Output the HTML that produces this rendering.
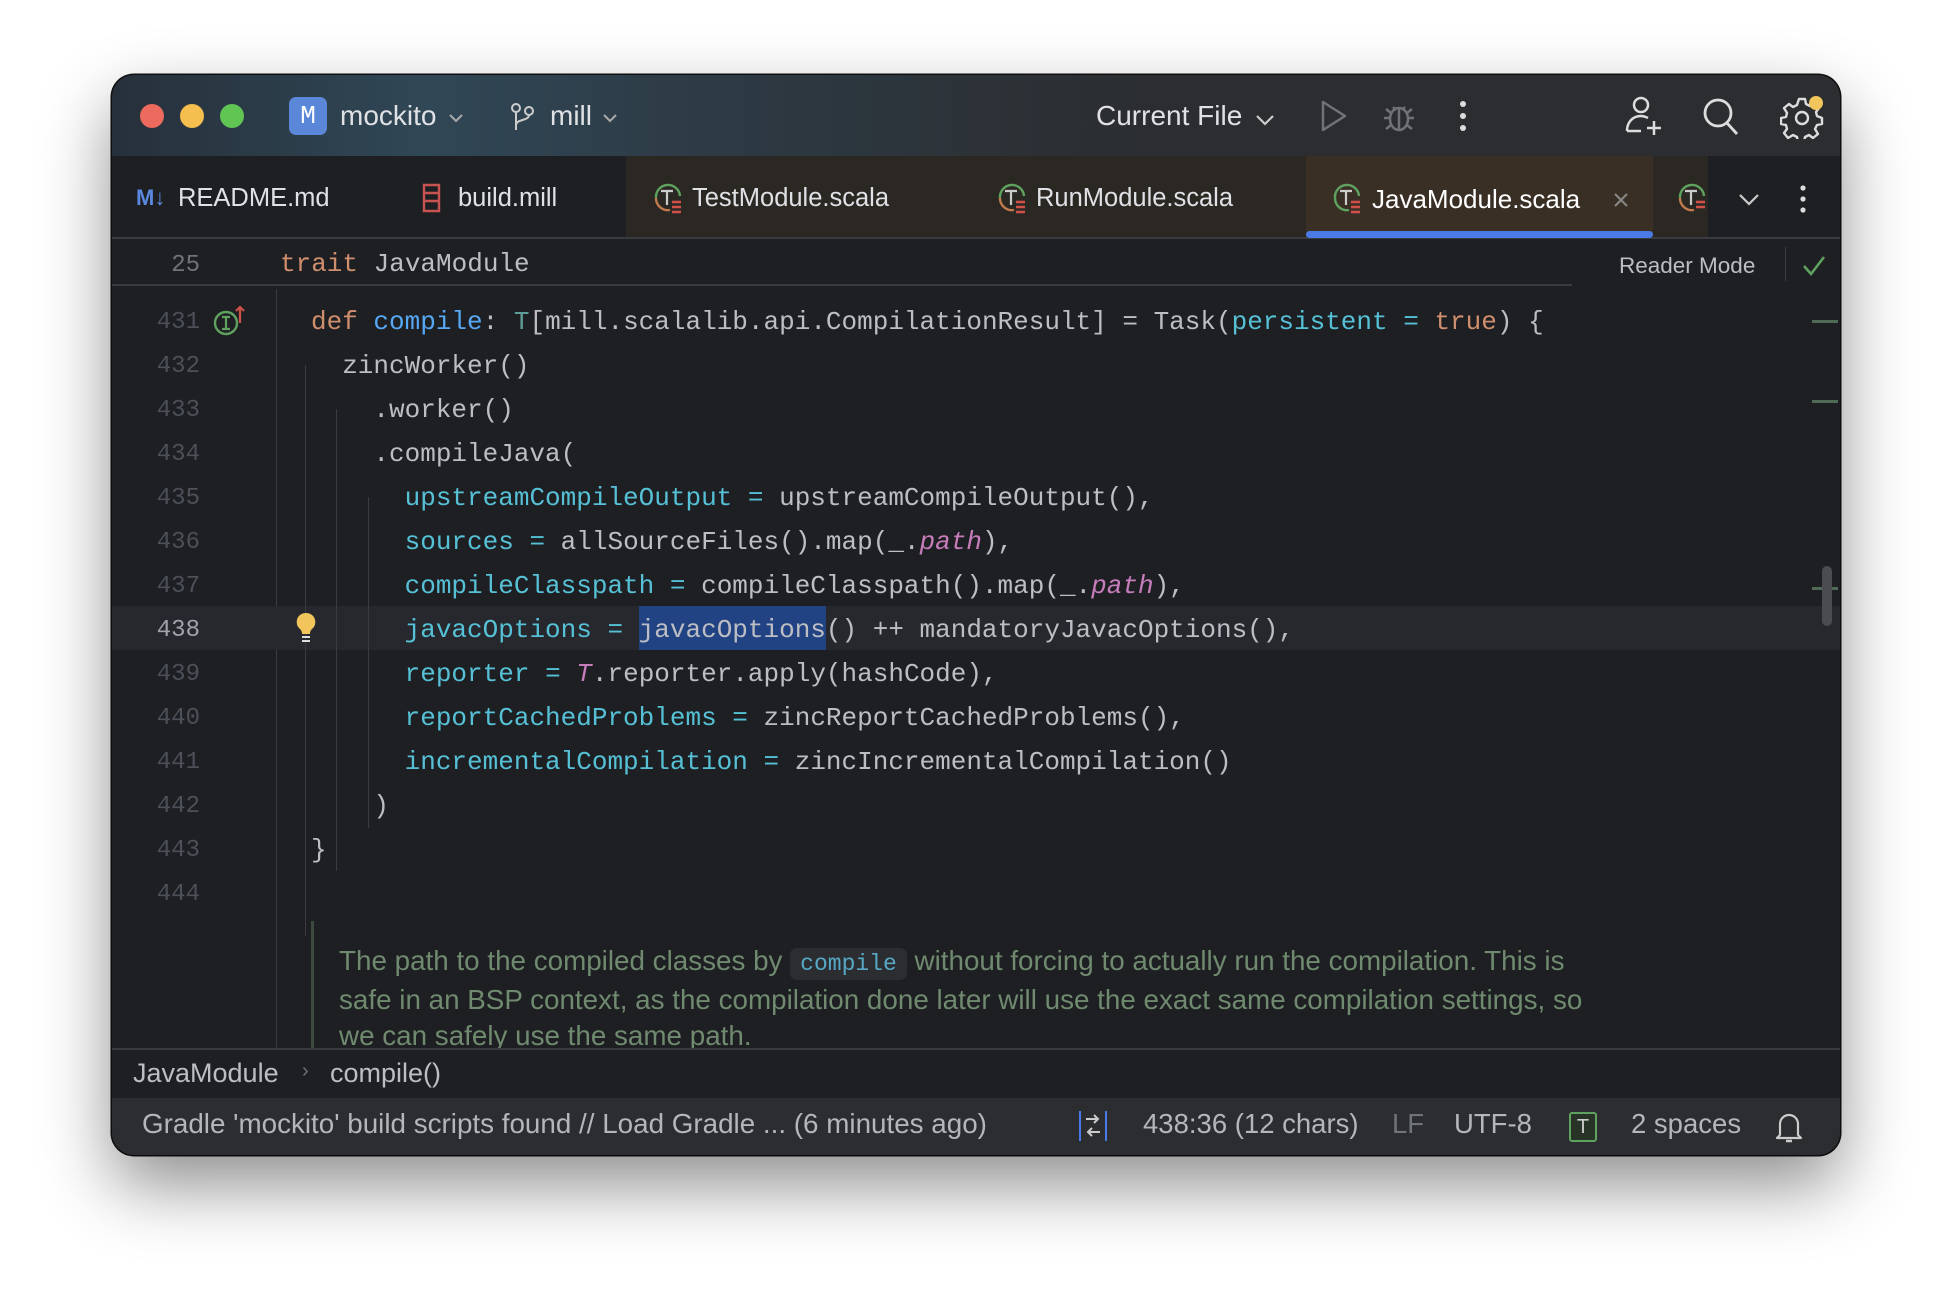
<!DOCTYPE html>
<html><head><meta charset="utf-8"><style>
*{margin:0;padding:0;box-sizing:border-box}
body{width:1952px;height:1304px;background:#fff;position:relative;overflow:hidden;font-family:"Liberation Sans",sans-serif}
.win{position:absolute;left:112px;top:75px;width:1728px;height:1080px;border-radius:22px;background:#1e1f22;overflow:hidden;box-shadow:0 30px 70px rgba(0,0,0,.45),0 0 0 1.5px #111;}
.abs{position:absolute}
.title{left:0;top:0;width:1728px;height:81px;background:linear-gradient(90deg,#26303a 0%,#304756 18%,#2d3a44 35%,#2b2d30 60%,#2b2d30 100%)}
.ui{color:#dfe1e5;font-size:27px;white-space:nowrap}
.tabs{left:0;top:81px;width:1728px;height:83px;background:#1e1f22;border-bottom:2px solid #393b40}
.tab{position:absolute;top:0;height:81px}
.code{font-family:"Liberation Mono",monospace;font-size:26px;color:#bcbec4;white-space:pre}
.ln{position:absolute;width:88px;text-align:right;left:0;font-family:"Liberation Mono",monospace;font-size:24px;color:#4b5059}
.k{color:#cf8e6d}.f{color:#56a8f5}.n{color:#56c1d6}.p{color:#c77dbb;font-style:italic}.t{color:#5f9e98}
.guide{position:absolute;width:1px;background:#393b40}
</style></head><body>
<div class="win">
 <div class="abs title"></div>
 <div class="abs" style="left:28px;top:29px;width:24px;height:24px;border-radius:50%;background:#ed6a5e"></div>
 <div class="abs" style="left:68px;top:29px;width:24px;height:24px;border-radius:50%;background:#f5bf4f"></div>
 <div class="abs" style="left:108px;top:29px;width:24px;height:24px;border-radius:50%;background:#61c554"></div>
 <div class="abs" style="left:177px;top:22px;width:38px;height:38px;border-radius:7px;background:#5a87d8;color:#fff;font-family:'Liberation Mono',monospace;font-size:26px;text-align:center;line-height:38px">M</div>
 <div class="abs ui" style="left:228px;top:25px;font-size:28px">mockito</div>
 <svg class="abs" style="left:336px;top:37px" width="16" height="12" viewBox="0 0 16 12"><path d="M2 3l6 6 6-6" stroke="#aaa" stroke-width="2" fill="none"/></svg>
 <svg class="abs" style="left:398px;top:27px" width="26" height="30" viewBox="0 0 26 30"><circle cx="6" cy="6" r="4" stroke="#ccc" stroke-width="2" fill="none"/><circle cx="19" cy="9" r="4" stroke="#ccc" stroke-width="2" fill="none"/><path d="M6 10v18M19 13c0 6-13 4-13 10" stroke="#ccc" stroke-width="2" fill="none"/></svg>
 <div class="abs ui" style="left:438px;top:25px;font-size:28px">mill</div>
 <svg class="abs" style="left:490px;top:37px" width="16" height="12" viewBox="0 0 16 12"><path d="M2 3l6 6 6-6" stroke="#aaa" stroke-width="2" fill="none"/></svg>
 <div class="abs ui" style="left:984px;top:25px;font-size:28px">Current File</div>
 <svg class="abs" style="left:1143px;top:38px" width="20" height="14" viewBox="0 0 20 14"><path d="M2 3l8 8 8-8" stroke="#ccc" stroke-width="2.2" fill="none"/></svg>
 <svg class="abs" style="left:1206px;top:24px" width="30" height="34" viewBox="0 0 30 34"><path d="M5 3v28l22-14z" stroke="#6f7277" stroke-width="2.5" fill="none" stroke-linejoin="round"/></svg>
 <svg class="abs" style="left:1270px;top:24px" width="34" height="34" viewBox="0 0 34 34"><ellipse cx="17" cy="20" rx="9" ry="11" stroke="#6f7277" stroke-width="2.5" fill="none"/><path d="M11 8l3 3M23 8l-3 3M2 19h6M26 19h6M4 10l5 4M30 10l-5 4M4 30l5-4M30 30l-5-4M17 10v21" stroke="#6f7277" stroke-width="2.5" fill="none"/></svg>
 <svg class="abs" style="left:1347px;top:24px" width="8" height="34" viewBox="0 0 8 34"><circle cx="4" cy="5" r="3" fill="#ddd"/><circle cx="4" cy="17" r="3" fill="#ddd"/><circle cx="4" cy="29" r="3" fill="#ddd"/></svg>
 <svg class="abs" style="left:1512px;top:20px" width="40" height="42" viewBox="0 0 40 42"><circle cx="17" cy="10" r="7" stroke="#ddd" stroke-width="2.5" fill="none"/><path d="M3 36c0-9 6-15 14-15 3 0 5 1 7 2" stroke="#ddd" stroke-width="2.5" fill="none"/><path d="M3 36h14M30 26v14M23 33h14" stroke="#ddd" stroke-width="2.5" fill="none"/></svg>
 <svg class="abs" style="left:1590px;top:22px" width="38" height="40" viewBox="0 0 38 40"><circle cx="16" cy="16" r="13" stroke="#ddd" stroke-width="2.8" fill="none"/><path d="M25 26l10 11" stroke="#ddd" stroke-width="2.8"/></svg>
 <svg class="abs" style="left:1668px;top:20px" width="44" height="44" viewBox="0 0 44 44"><path d="M19 4h6l1 5 4 2 5-3 4 5-3 4 1 4 5 2v6l-5 1-2 4 3 5-5 4-4-3-4 2-1 5h-6l-1-5-4-2-5 3-4-5 3-4-1-4-5-1v-6l5-1 1-4-3-5 5-4 4 3 4-2z" stroke="#ddd" stroke-width="2.4" fill="none" stroke-linejoin="round"/><circle cx="22" cy="23" r="6" stroke="#ddd" stroke-width="2.4" fill="none"/><circle cx="36" cy="8" r="7" fill="#f2c55c"/></svg>

 <div class="abs tabs">
  <div class="tab" style="left:514px;width:680px;background:#2b2824"></div>
  <div class="tab" style="left:1194px;width:347px;background:#3a2f25"></div>
  <div class="tab" style="left:1541px;width:55px;background:#2b2824"></div>
  <div class="abs" style="left:1194px;top:75px;width:347px;height:7px;border-radius:4px;background:#4a7ae6"></div>
  <div class="abs" style="left:24px;top:29px;font-size:22px;font-weight:bold;color:#5b88e0">M↓</div>
  <div class="abs ui" style="left:66px;top:28px;font-size:25.5px">README.md</div>
  <svg class="abs" style="left:309px;top:26px" width="22" height="32" viewBox="0 0 22 32"><path d="M3 3h15v26H3z M3 11h15M3 19h15" stroke="#c75450" stroke-width="2.4" fill="none"/></svg>
  <div class="abs ui" style="left:346px;top:28px;font-size:25.5px">build.mill</div>
  <svg class="abs" style="left:540px;top:26px" width="34" height="34" viewBox="0 0 34 34"><path d="M4 16a12 12 0 0 1 24-2" stroke="#5fa15f" stroke-width="2.4" fill="none"/><path d="M4 16a12 12 0 0 0 14 12" stroke="#c17a4e" stroke-width="2.4" fill="none"/><path d="M9 9h12M15 9v14" stroke="#ccc" stroke-width="2.2"/><path d="M20 20h9M20 25h9M20 30h9" stroke="#d0504a" stroke-width="2.4"/></svg>
  <div class="abs ui" style="left:580px;top:28px;font-size:25.5px">TestModule.scala</div>
  <svg class="abs" style="left:884px;top:26px" width="34" height="34" viewBox="0 0 34 34"><path d="M4 16a12 12 0 0 1 24-2" stroke="#5fa15f" stroke-width="2.4" fill="none"/><path d="M4 16a12 12 0 0 0 14 12" stroke="#c17a4e" stroke-width="2.4" fill="none"/><path d="M9 9h12M15 9v14" stroke="#ccc" stroke-width="2.2"/><path d="M20 20h9M20 25h9M20 30h9" stroke="#d0504a" stroke-width="2.4"/></svg>
  <div class="abs ui" style="left:924px;top:28px;font-size:25.5px">RunModule.scala</div>
  <svg class="abs" style="left:1219px;top:26px" width="34" height="34" viewBox="0 0 34 34"><path d="M4 16a12 12 0 0 1 24-2" stroke="#5fa15f" stroke-width="2.4" fill="none"/><path d="M4 16a12 12 0 0 0 14 12" stroke="#5fa15f" stroke-width="2.4" fill="none"/><path d="M9 9h12M15 9v14" stroke="#ccc" stroke-width="2.2"/><path d="M20 20h9M20 25h9M20 30h9" stroke="#d0504a" stroke-width="2.4"/></svg>
  <div class="abs ui" style="left:1260px;top:28px;font-size:26px;color:#fff">JavaModule.scala</div>
  <svg class="abs" style="left:1500px;top:35px" width="18" height="18" viewBox="0 0 18 18"><path d="M3 3l12 12M15 3L3 15" stroke="#888" stroke-width="2"/></svg>
  <svg class="abs" style="left:1564px;top:26px" width="32" height="34" viewBox="0 0 32 34"><path d="M4 16a12 12 0 0 1 24-2" stroke="#5fa15f" stroke-width="2.4" fill="none"/><path d="M4 16a12 12 0 0 0 14 12" stroke="#c17a4e" stroke-width="2.4" fill="none"/><path d="M9 9h12M15 9v14" stroke="#ccc" stroke-width="2.2"/><path d="M20 20h9M20 25h9" stroke="#d0504a" stroke-width="2.4"/></svg>
  <svg class="abs" style="left:1626px;top:36px" width="22" height="14" viewBox="0 0 22 14"><path d="M2 3l9 9 9-9" stroke="#ccc" stroke-width="2.2" fill="none"/></svg>
  <svg class="abs" style="left:1687px;top:28px" width="8" height="30" viewBox="0 0 8 30"><circle cx="4" cy="4" r="2.6" fill="#ddd"/><circle cx="4" cy="15" r="2.6" fill="#ddd"/><circle cx="4" cy="26" r="2.6" fill="#ddd"/></svg>
 </div>

 <!-- sticky header -->
 <div class="abs" style="left:0;top:164px;width:1460px;height:47px;border-bottom:2px solid #393b40"></div>
 <div class="ln" style="top:177px;color:#6f737a">25</div>
 <div class="abs code" style="left:168px;top:174px"><span class="k">trait</span> JavaModule</div>
 <div class="abs" style="left:1460px;top:164px;width:268px;height:50px;background:#1e1f22"></div>
 <div class="abs ui" style="left:1507px;top:178px;font-size:22.5px;color:#bcbec4">Reader Mode</div>
 <div class="abs" style="left:1673px;top:172px;width:1px;height:34px;background:#393b40"></div>
 <svg class="abs" style="left:1690px;top:180px" width="24" height="22" viewBox="0 0 24 22"><path d="M2 11l7 8L22 2" stroke="#5fa15f" stroke-width="2.6" fill="none"/></svg>

 <!-- gutter -->
 <div class="abs" style="left:164px;top:214px;width:1px;height:760px;background:#393b40"></div>
 <div class="abs" style="left:0;top:531px;width:1728px;height:44px;background:#26282e"></div>
 <div class="guide" style="left:193px;top:290px;height:571px"></div>
 <div class="guide" style="left:224px;top:334px;height:462px"></div>
 <div class="guide" style="left:256px;top:422px;height:331px"></div>
 <div class="abs" style="left:527px;top:531px;width:187px;height:44px;background:#214283"></div>

 <div class="ln" style="top:234px">431</div>
 <div class="ln" style="top:278px">432</div>
 <div class="ln" style="top:322px">433</div>
 <div class="ln" style="top:366px">434</div>
 <div class="ln" style="top:410px">435</div>
 <div class="ln" style="top:454px">436</div>
 <div class="ln" style="top:498px">437</div>
 <div class="ln" style="top:542px;color:#a1a3ab">438</div>
 <div class="ln" style="top:586px">439</div>
 <div class="ln" style="top:630px">440</div>
 <div class="ln" style="top:674px">441</div>
 <div class="ln" style="top:718px">442</div>
 <div class="ln" style="top:762px">443</div>
 <div class="ln" style="top:806px">444</div>
 <svg class="abs" style="left:100px;top:228px" width="36" height="36" viewBox="0 0 36 36"><circle cx="14" cy="20" r="11" stroke="#5fa15f" stroke-width="2.4" fill="none"/><path d="M10 14h8M14 14v12M10 26h8" stroke="#5fa15f" stroke-width="2.2"/><path d="M28 20V4M24 8l4-4 4 4" stroke="#d0504a" stroke-width="2.2" fill="none"/></svg>
 <svg class="abs" style="left:182px;top:536px" width="24" height="34" viewBox="0 0 24 34"><path d="M12 2a9 9 0 0 0-6 16c2 2 2 4 2 5h8c0-1 0-3 2-5A9 9 0 0 0 12 2z" fill="#f2c55c"/><path d="M8 26h8M8 30h8" stroke="#ddd" stroke-width="2"/></svg>

 <div class="abs code" style="left:199px;top:225px;line-height:44px"><span class="k">def</span> <span class="f">compile</span>: <span class="t">T</span>[mill.scalalib.api.CompilationResult] = Task(<span class="n">persistent</span> <span class="n">=</span> <span class="k">true</span>) {
  zincWorker()
    .worker()
    .compileJava(
      <span class="n">upstreamCompileOutput</span> <span class="n">=</span> upstreamCompileOutput(),
      <span class="n">sources</span> <span class="n">=</span> allSourceFiles().map(_.<span class="p">path</span>),
      <span class="n">compileClasspath</span> <span class="n">=</span> compileClasspath().map(_.<span class="p">path</span>),
      <span class="n">javacOptions</span> <span class="n">=</span> javacOptions() ++ mandatoryJavacOptions(),
      <span class="n">reporter</span> <span class="n">=</span> <span class="p">T</span>.reporter.apply(hashCode),
      <span class="n">reportCachedProblems</span> <span class="n">=</span> zincReportCachedProblems(),
      <span class="n">incrementalCompilation</span> <span class="n">=</span> zincIncrementalCompilation()
    )
}</div>

 <!-- scroll markers -->
 <div class="abs" style="left:1700px;top:245px;width:26px;height:3px;background:#4f6a55"></div>
 <div class="abs" style="left:1700px;top:325px;width:26px;height:3px;background:#4f6a55"></div>
 <div class="abs" style="left:1700px;top:512px;width:26px;height:3px;background:#4f6a55"></div>
 <div class="abs" style="left:1710px;top:491px;width:10px;height:60px;border-radius:5px;background:#4a4c50"></div>

 <!-- doc -->
 <div class="abs" style="left:199px;top:846px;width:3px;height:130px;background:#3d4a3e"></div>
 <div class="abs" style="left:227px;top:868px;width:1245px;font-size:27.8px;line-height:36px;color:#6f8a6f">The path to the compiled classes by <span style="font-family:'Liberation Mono',monospace;font-size:23px;color:#56a8c5;background:#2b2d30;border-radius:7px;padding:3px 10px">compile</span> without forcing to actually run the compilation. This is safe in an BSP context, as the compilation done later will use the exact same compilation settings, so we can safely use the same path.</div>

 <!-- breadcrumb -->
 <div class="abs" style="left:0;top:973px;width:1728px;height:50px;background:#1e1f22;border-top:2px solid #393b40"></div>
 <div class="abs ui" style="left:21px;top:983px;font-size:27px;color:#bcbec4">JavaModule</div>
 <div class="abs ui" style="left:190px;top:985px;font-size:20px;color:#6f737a">›</div>
 <div class="abs ui" style="left:218px;top:983px;font-size:27px;color:#bcbec4">compile()</div>

 <!-- status -->
 <div class="abs" style="left:0;top:1023px;width:1728px;height:57px;background:#2b2d30"></div>
 <div class="abs ui" style="left:30px;top:1033px;font-size:27.8px;color:#b4b6bb">Gradle 'mockito' build scripts found // Load Gradle ... (6 minutes ago)</div>
 <svg class="abs" style="left:966px;top:1035px" width="30" height="32" viewBox="0 0 30 32"><path d="M2 1v30M28 1v30" stroke="#4a7ae6" stroke-width="2"/><path d="M8 9h12M16 5l4 4-4 4M22 22H10M14 18l-4 4 4 4" stroke="#ccc" stroke-width="2" fill="none"/></svg>
 <div class="abs ui" style="left:1031px;top:1033px;font-size:27.5px;color:#b4b6bb">438:36 (12 chars)</div>
 <div class="abs ui" style="left:1280px;top:1033px;font-size:27.5px;color:#6f737a">LF</div>
 <div class="abs ui" style="left:1342px;top:1033px;font-size:27.5px;color:#b4b6bb">UTF-8</div>
 <div class="abs" style="left:1457px;top:1037px;width:28px;height:30px;border:2px solid #5fa15f;border-radius:3px;background:#263326;color:#ccc;font-size:20px;text-align:center;line-height:26px">T</div>
 <div class="abs ui" style="left:1519px;top:1033px;font-size:27.5px;color:#b4b6bb">2 spaces</div>
 <svg class="abs" style="left:1662px;top:1034px" width="30" height="36" viewBox="0 0 30 36"><path d="M6 26V15a9 9 0 0 1 18 0v11l3 3H3z" stroke="#ccc" stroke-width="2.2" fill="none" stroke-linejoin="round"/><path d="M12 32h6" stroke="#ccc" stroke-width="2.4"/></svg>
</div>
</body></html>
